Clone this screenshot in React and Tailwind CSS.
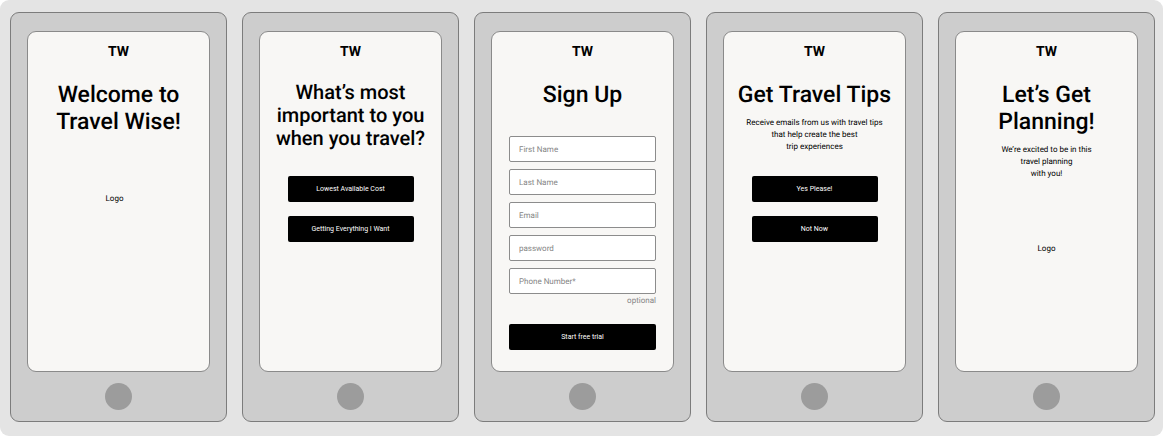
import React from "react";

function Phone({ label, children }) {
  return (
    <section
      aria-label={label}
      className="flex flex-col items-center rounded-[9px] border border-[#7c7c7c] bg-[#cdcdcd] px-4 pt-[18px] pb-[11px]"
    >
      <div className="flex w-full flex-1 flex-col items-center rounded-[9px] border border-[#8a8a8a] bg-[#f8f7f5] px-[2px] pt-[10px] pb-[21px] text-center">
        <p className="text-[14px] leading-5 font-bold">TW</p>
        {children}
      </div>
      <button
        type="button"
        aria-label="Home"
        className="mt-[11px] size-[27px] rounded-full bg-[#9c9c9c]"
      />
    </section>
  );
}

function Title({ children }) {
  return (
    <h2 className="mt-[19px] text-[23px] leading-[27px] font-medium">
      {children}
    </h2>
  );
}

function ActionButton({ children, type = "button" }) {
  return (
    <button
      type={type}
      className="h-[26px] w-full rounded-[2px] bg-black text-[7px] text-white"
    >
      {children}
    </button>
  );
}

const fields = [
  { id: "first-name", label: "First Name", type: "text" },
  { id: "last-name", label: "Last Name", type: "text" },
  { id: "email", label: "Email", type: "email" },
  { id: "password", label: "password", type: "password" },
  { id: "phone", label: "Phone Number*", type: "tel" },
];

export default function App() {
  return (
    <main className="grid grid-cols-5 gap-[15px] rounded-[9px] bg-[#e4e4e4] pt-3 pr-2 pb-[14px] pl-[10px] font-['Roboto',sans-serif] text-black [text-rendering:geometricPrecision]">
      <Phone label="Welcome">
        <Title>
          Welcome to
          <br />
          Travel Wise!
        </Title>
        <p className="mt-[58px] pr-2 text-[8px] leading-3">Logo</p>
      </Phone>

      <Phone label="Priorities">
        <h2 className="mt-[19px] text-[20px] leading-[23px] font-medium">
          What’s most
          <br />
          important to you
          <br />
          when you travel?
        </h2>
        <div className="mt-[26px] flex w-[126px] flex-col gap-[14px]">
          <ActionButton>Lowest Available Cost</ActionButton>
          <ActionButton>Getting Everything I Want</ActionButton>
        </div>
      </Phone>

      <Phone label="Sign up">
        <Title>Sign Up</Title>
        <form
          className="mt-7 flex w-[147px] flex-col"
          onSubmit={(event) => event.preventDefault()}
        >
          <div className="flex flex-col gap-[7px]">
            {fields.map((field) => (
              <input
                key={field.id}
                id={field.id}
                type={field.type}
                aria-label={field.label}
                placeholder={field.label}
                className="h-[26px] w-full rounded-[2px] border border-[#8c8c8c] bg-white px-[9px] text-[8px] [text-rendering:geometricPrecision] placeholder:text-[#858585]"
              />
            ))}
          </div>
          <p className="mt-px mb-[17px] text-right text-[8px] leading-3 text-[#858585]">
            optional
          </p>
          <ActionButton type="submit">Start free trial</ActionButton>
        </form>
      </Phone>

      <Phone label="Travel tips">
        <Title>Get Travel Tips</Title>
        <p className="mt-[9px] text-[8px] leading-3">
          Receive emails from us with travel tips
          <br />
          that help create the best
          <br />
          trip experiences
        </p>
        <div className="mt-[23px] flex w-[126px] flex-col gap-[14px]">
          <ActionButton>Yes Please!</ActionButton>
          <ActionButton>Not Now</ActionButton>
        </div>
      </Phone>

      <Phone label="Planning">
        <Title>
          Let’s Get
          <br />
          Planning!
        </Title>
        <p className="mt-[9px] text-[8px] leading-3">
          We’re excited to be in this
          <br />
          travel planning
          <br />
          with you!
        </p>
        <p className="mt-[63px] text-[8px] leading-3">Logo</p>
      </Phone>
    </main>
  );
}
